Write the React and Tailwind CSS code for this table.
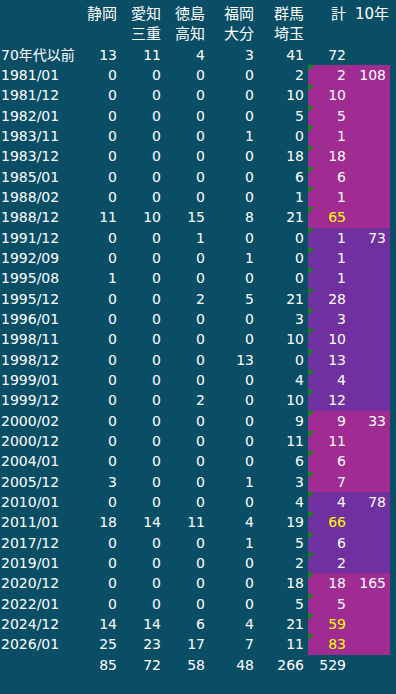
const MAG = "bg-[#a02b93]";
const PUR = "bg-[#7030a0]";

// [label, 静岡, 愛知, 徳島, 福岡, 群馬, 計, 10年, yellow]
const rows = [
  ["1981/01", 0, 0, 0, 0, 2, 2, 108],
  ["1981/12", 0, 0, 0, 0, 10, 10],
  ["1982/01", 0, 0, 0, 0, 5, 5],
  ["1983/11", 0, 0, 0, 1, 0, 1],
  ["1983/12", 0, 0, 0, 0, 18, 18],
  ["1985/01", 0, 0, 0, 0, 6, 6],
  ["1988/02", 0, 0, 0, 0, 1, 1],
  ["1988/12", 11, 10, 15, 8, 21, 65, null, true],
  ["1991/12", 0, 0, 1, 0, 0, 1, 73],
  ["1992/09", 0, 0, 0, 1, 0, 1],
  ["1995/08", 1, 0, 0, 0, 0, 1],
  ["1995/12", 0, 0, 2, 5, 21, 28],
  ["1996/01", 0, 0, 0, 0, 3, 3],
  ["1998/11", 0, 0, 0, 0, 10, 10],
  ["1998/12", 0, 0, 0, 13, 0, 13],
  ["1999/01", 0, 0, 0, 0, 4, 4],
  ["1999/12", 0, 0, 2, 0, 10, 12],
  ["2000/02", 0, 0, 0, 0, 9, 9, 33],
  ["2000/12", 0, 0, 0, 0, 11, 11],
  ["2004/01", 0, 0, 0, 0, 6, 6],
  ["2005/12", 3, 0, 0, 1, 3, 7],
  ["2010/01", 0, 0, 0, 0, 4, 4, 78],
  ["2011/01", 18, 14, 11, 4, 19, 66, null, true],
  ["2017/12", 0, 0, 0, 1, 5, 6],
  ["2019/01", 0, 0, 0, 0, 2, 2],
  ["2020/12", 0, 0, 0, 0, 18, 18, 165],
  ["2022/01", 0, 0, 0, 0, 5, 5],
  ["2024/12", 14, 14, 6, 4, 21, 59, null, true],
  ["2026/01", 25, 23, 17, 7, 11, 83, null, true],
];

// 10年ごとの色分け
const bands = [
  [0, 8, MAG],
  [8, 17, PUR],
  [17, 21, MAG],
  [21, 25, PUR],
  [25, 29, MAG],
];

function bandOf(i) {
  const b = bands.find(([s, e]) => i >= s && i < e);
  return b ? b[2] : "";
}

const grid =
  "grid grid-cols-[77px_44px_44px_44px_49px_50px_42px_40px] h-[20.33px] leading-[20.33px]";

function Num({ v, className = "" }) {
  return <div className={"text-right pr-1 " + className}>{v}</div>;
}

function Row({ r, i }) {
  const bg = bandOf(i);
  return (
    <div className={grid}>
      <div className="pl-[1px] whitespace-nowrap">{r[0]}</div>
      {r.slice(1, 6).map((v, k) => (
        <Num key={k} v={v} />
      ))}
      <div className={"relative text-right pr-1 " + bg + (r[8] ? " text-[#ffff00]" : "")}>
        {/* Excel の緑三角 */}
        <span className="absolute left-0 top-0 w-0 h-0 border-t-[6px] border-t-[#0f8a10] border-r-[6px] border-r-transparent" />
        {r[6]}
      </div>
      <Num v={r[7] ?? ""} className={bg} />
    </div>
  );
}

export default function App() {
  return (
    <div
      className="w-[396px] h-[694px] overflow-hidden bg-[#0a4e66] text-white text-[14px] pt-1"
      style={{ fontFamily: '"DejaVu Sans", "Noto Sans CJK JP", sans-serif' }}
    >
      <div className={grid + " text-[15px]"}>
        <div />
        <Num v="静岡" />
        <Num v="愛知" />
        <Num v="徳島" />
        <Num v="福岡" />
        <Num v="群馬" />
        <Num v="計" />
        <div className="pl-[5px] whitespace-nowrap">10年</div>
      </div>
      <div className={grid + " text-[15px]"}>
        <div />
        <div />
        <Num v="三重" />
        <Num v="高知" />
        <Num v="大分" />
        <Num v="埼玉" />
        <div />
        <div />
      </div>
      <div className={grid}>
        <div className="pl-[1px] whitespace-nowrap">70年代以前</div>
        <Num v={13} />
        <Num v={11} />
        <Num v={4} />
        <Num v={3} />
        <Num v={41} />
        <Num v={72} />
        <div />
      </div>
      {rows.map((r, i) => (
        <Row key={r[0]} r={r} i={i} />
      ))}
      <div className={grid}>
        <div />
        <Num v={85} />
        <Num v={72} />
        <Num v={58} />
        <Num v={48} />
        <Num v={266} />
        <Num v={529} />
        <div />
      </div>
    </div>
  );
}
